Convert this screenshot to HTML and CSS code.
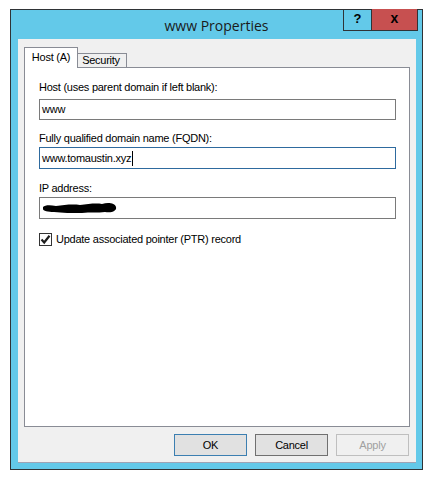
FILE: index.html
```html
<!DOCTYPE html>
<html>
<head>
<meta charset="utf-8">
<link rel="stylesheet" href="styles.css">
</head>
<body>
<div class="window">
  <div class="titlebar">
    <div></div>
    <div class="title">www Properties</div>
    <div class="caption-btns">
      <div class="cap help">?</div>
      <div class="cap close">x</div>
    </div>
  </div>
  <div class="client">
    <div class="tabs">
      <div class="tab active">Host (A)</div>
      <div class="tab">Security</div>
    </div>
    <div class="panel">
      <div class="label l1">Host (uses parent domain if left blank):</div>
      <div class="input">www</div>
      <div class="label l2">Fully qualified domain name (FQDN):</div>
      <div class="input focused">www.tomaustin.xyz<span class="caret"></span></div>
      <div class="label l3">IP address:</div>
      <div class="input">
        <svg class="redact" width="76" height="14" viewBox="0 0 76 14">
          <path d="M1 6 C3 4 8 4 14 5 C22 4 30 3 38 4 C46 3 54 2 60 3 C66 1 73 2 74 6 C75 10 70 12 63 11 C56 12 48 11 40 12 C30 12 20 12 12 11 C6 11 1 10 1 8 Z" fill="#000"/>
        </svg>
      </div>
      <div class="check-row">
        <span class="checkbox">
          <svg width="11" height="11" viewBox="0 0 11 11"><path d="M1.5 5.5 L4.2 8.5 L9.5 1.8" fill="none" stroke="#1e1e1e" stroke-width="2.2"/></svg>
        </span>
        <span class="check-label">Update associated pointer (PTR) record</span>
      </div>
    </div>
    <div class="buttons">
      <div class="btn default">OK</div>
      <div class="btn">Cancel</div>
      <div class="btn disabled">Apply</div>
    </div>
  </div>
</div>
</body>
</html>
```
FILE: styles.css
```css
html, body {
  margin: 0;
  padding: 0;
  background: #ffffff;
}
body {
  font-family: "Liberation Sans", Arial, sans-serif;
  font-size: 11px;
  letter-spacing: -0.25px;
  color: #000;
}
.window {
  box-sizing: border-box;
  margin: 9px 0 0 10px;
  width: 413px;
  height: 461px;
  border: 1px solid #2f3336;
  background: #63c9e9;
  display: flex;
  flex-direction: column;
}
.titlebar {
  height: 29px;
  display: grid;
  grid-template-columns: 1fr auto 1fr;
  align-items: start;
}
.title {
  font-family: "Open Sans", "Noto Sans", sans-serif;
  font-size: 14px;
  letter-spacing: 0;
  line-height: 20px;
  padding-top: 6px;
  color: #1a1a1a;
  white-space: nowrap;
}
.caption-btns {
  justify-self: end;
  display: flex;
  margin-top: -1px;
  margin-right: 4px;
}
.cap {
  box-sizing: border-box;
  height: 22px;
  border-bottom: 1px solid #2f3336;
  border-left: 1px solid #2f3336;
  text-align: center;
  font-weight: bold;
  font-family: "Liberation Sans", Arial, sans-serif;
  letter-spacing: 0;
  line-height: 19px;
}
.help {
  width: 28px;
  font-size: 13px;
}
.close {
  width: 47px;
  border-right: 1px solid #2f3336;
  background: #c75050;
  font-size: 14px;
}
.client {
  box-sizing: border-box;
  margin: 0 6px 0 7px;
  height: 424px;
  background: #f0f0f0;
  border-bottom: 1px solid #9ea3b4;
  padding: 8px 6px 0 6px;
  display: flex;
  flex-direction: column;
}
.tabs {
  display: flex;
  align-items: flex-end;
  height: 20px;
}
.tab {
  box-sizing: border-box;
  text-align: center;
  line-height: 13px;
  white-space: nowrap;
}
.tab.active {
  width: 54px;
  height: 21px;
  margin-bottom: -1px;
  border: 1px solid #898c95;
  border-bottom: none;
  background: #fff;
  position: relative;
  z-index: 1;
  padding-top: 3px;
}
.tab:not(.active) {
  width: 49px;
  height: 14px;
  border-top: 1px solid #898c95;
  border-right: 1px solid #898c95;
  padding-top: 0px;
  padding-right: 2px;
}
.panel {
  box-sizing: border-box;
  height: 360px;
  border: 1px solid #898c95;
  background: #fff;
  padding: 13px 13px 0 14px;
  display: flex;
  flex-direction: column;
}
.label {
  line-height: 13px;
  white-space: nowrap;
}
.l2 { margin-top: 12px; }
.l3 { margin-top: 13px; }
.input {
  box-sizing: border-box;
  height: 21px;
  margin-top: 5px;
  border: 1px solid #7a7a7a;
  line-height: 19px;
  padding-left: 2px;
  display: flex;
  align-items: center;
}
.label.l2 + .input { margin-top: 2px; }
.label.l3 + .input { margin-top: 2px; height: 22px; }
.input.focused {
  border-color: #2e6a9e;
  height: 22px;
}
.caret {
  display: inline-block;
  width: 1px;
  height: 15px;
  background: #000;
  margin-left: 1px;
}
.redact {
  display: block;
}
.check-row {
  display: flex;
  align-items: center;
  margin-top: 14px;
  height: 13px;
}
.checkbox {
  box-sizing: border-box;
  width: 13px;
  height: 13px;
  border: 1px solid #333;
  background: #fff;
  display: flex;
  align-items: center;
  justify-content: center;
}
.checkbox svg { display: block; }
.check-label {
  margin-left: 4px;
  line-height: 13px;
  white-space: nowrap;
}
.buttons {
  display: flex;
  justify-content: flex-end;
  gap: 8px;
  margin-top: 7px;
  padding-right: 1px;
}
.btn {
  box-sizing: border-box;
  width: 73px;
  height: 22px;
  border: 1px solid #707070;
  background: #e1e1e1;
  text-align: center;
  line-height: 20px;
}
.btn.default {
  border-color: #3c7fb1;
}
.btn.disabled {
  border-color: #bfbfbf;
  background: #f0f0f0;
  color: #a0a0a0;
}
```
